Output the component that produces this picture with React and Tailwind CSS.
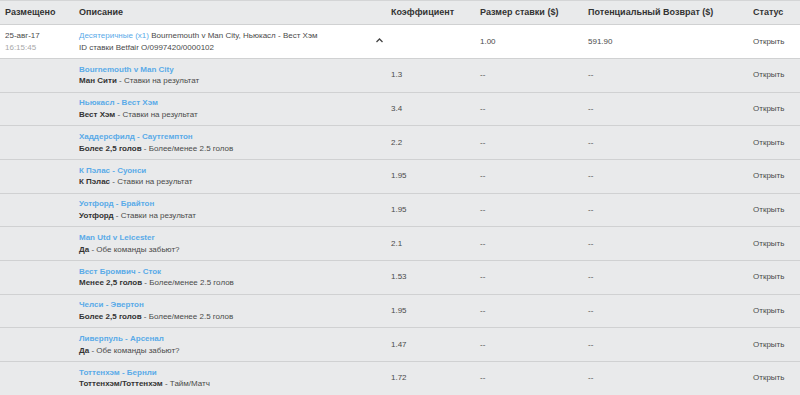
import React from "react";

const legs = [
  { match: "Bournemouth v Man City", pick: "Ман Сити", market: "Ставки на результат", odds: "1.3" },
  { match: "Ньюкасл - Вест Хэм", pick: "Вест Хэм", market: "Ставки на результат", odds: "3.4" },
  { match: "Хаддерсфилд - Саутгемптон", pick: "Более 2,5 голов", market: "Более/менее 2.5 голов", odds: "2.2" },
  { match: "К Пэлас - Суонси", pick: "К Пэлас", market: "Ставки на результат", odds: "1.95" },
  { match: "Уотфорд - Брайтон", pick: "Уотфорд", market: "Ставки на результат", odds: "1.95" },
  { match: "Man Utd v Leicester", pick: "Да", market: "Обе команды забьют?", odds: "2.1" },
  { match: "Вест Бромвич - Сток", pick: "Менее 2,5 голов", market: "Более/менее 2.5 голов", odds: "1.53" },
  { match: "Челси - Эвертон", pick: "Более 2,5 голов", market: "Более/менее 2.5 голов", odds: "1.95" },
  { match: "Ливерпуль - Арсенал", pick: "Да", market: "Обе команды забьют?", odds: "1.47" },
  { match: "Тоттенхэм - Бернли", pick: "Тоттенхэм/Тоттенхэм", market: "Тайм/Матч", odds: "1.72" },
];

// ширины колонок подогнаны под скрин
const cols = "grid grid-cols-[74px_312px_89px_108px_165px_1fr]";

const App = () => {
  return (
    <div
      className="w-[800px] h-[395px] overflow-hidden bg-[#e9eaeb] text-[8px] text-[#4a4a4a] border-t border-[#d4d5d6]"
      style={{ fontFamily: '"Liberation Sans", Arial, sans-serif' }}
    >
      {/* Header */}
      <div className={`${cols} h-[24px] items-center border-b border-[#d0d1d2] font-bold text-[9px] text-[#333]`}>
        <div className="pl-[5px]">Размещено</div>
        <div className="pl-[5px]">Описание</div>
        <div className="pl-[5px]">Коэффициент</div>
        <div className="pl-[5px]">Размер ставки ($)</div>
        <div className="pl-[5px]">Потенциальный Возврат ($)</div>
        <div className="pl-[5px]">Статус</div>
      </div>

      {/* Main bet row */}
      <div className={`${cols} h-[34px] items-center bg-white border-b border-[#d0d1d2] leading-[11.7px]`}>
        <div className="pl-[5px]">
          <div>25-авг-17</div>
          <div className="text-[#a8a8a8]">16:15:45</div>
        </div>
        <div className="pl-[5px] flex items-center justify-between pr-[2px]">
          <div>
            <div>
              <span className="text-[#5aaae8]">Десятеричные (x1)</span> Bournemouth v Man City, Ньюкасл - Вест Хэм
            </div>
            <div>ID ставки Betfair O/0997420/0000102</div>
          </div>
          <svg width="9" height="6" viewBox="0 0 9 6" className="mb-[4px]">
            <path d="M1.5 5 L4.5 2 L7.5 5" fill="none" stroke="#444" strokeWidth="1.3" />
          </svg>
        </div>
        <div className="pl-[5px]"></div>
        <div className="pl-[5px]">1.00</div>
        <div className="pl-[5px]">591.90</div>
        <div className="pl-[5px]">Открыть</div>
      </div>

      {/* Legs */}
      {legs.map((leg, i) => (
        <div
          key={i}
          className={`${cols} h-[33.67px] items-center border-b border-[#d0d1d2] leading-[11.7px]`}
        >
          <div></div>
          <div className="pl-[5px]">
            <div className="font-bold text-[#5aaae8]">{leg.match}</div>
            <div>
              <span className="font-bold text-[#333]">{leg.pick}</span> - {leg.market}
            </div>
          </div>
          <div className="pl-[5px]">{leg.odds}</div>
          <div className="pl-[5px]">--</div>
          <div className="pl-[5px]">--</div>
          <div className="pl-[5px]">Открыть</div>
        </div>
      ))}
    </div>
  );
};

export default App;
